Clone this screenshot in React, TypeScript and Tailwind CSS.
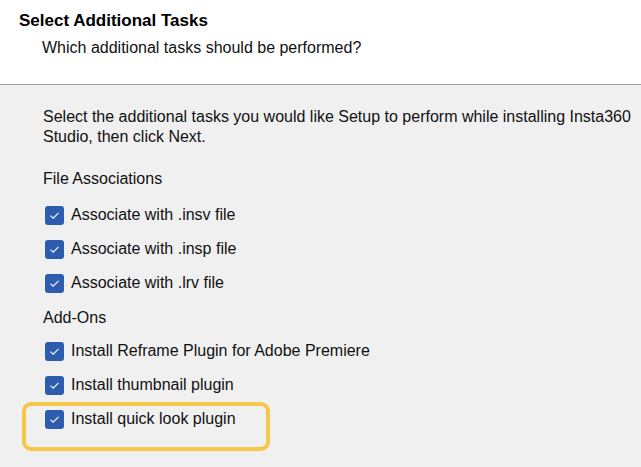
import React from "react";

const Check = () => (
  <span className="flex h-[19px] w-[19px] shrink-0 items-center justify-center rounded-[3px] bg-[#2b5cad]">
    <svg width="11" height="9" viewBox="0 0 11 9" fill="none">
      <path d="M1.5 4.6 L4.2 7.2 L9.5 1.8" stroke="white" strokeWidth="1.1" />
    </svg>
  </span>
);

const Row = ({ label }: { label: string }) => (
  <div className="flex h-[34px] items-center gap-[7px] pl-[45px]">
    <Check />
    <span>{label}</span>
  </div>
);

export default function App() {
  return (
    <div
      className="h-[467px] w-[641px] overflow-hidden bg-[#f0f0f0] text-[16px] text-[#111]"
      style={{ fontFamily: '"Liberation Sans", Arial, sans-serif' }}
    >
      <div className="h-[85px] border-b border-[#a0a0a0] bg-white pl-[19px] pt-[10px]">
        <div className="text-[17px] font-bold leading-[22px] text-black">Select Additional Tasks</div>
        <div className="pl-[23px] pt-[5px] leading-[22px]">Which additional tasks should be performed?</div>
      </div>
      <div className="pt-[22px]">
        <div className="pl-[43px] pr-[10px] leading-[20px]">
          Select the additional tasks you would like Setup to perform while installing Insta360 Studio, then click Next.
        </div>
        <div className="pl-[43px] pt-[21px] leading-[22px]">File Associations</div>
        <div className="pt-[8px]">
          <Row label="Associate with .insv file" />
          <Row label="Associate with .insp file" />
          <Row label="Associate with .lrv file" />
        </div>
        <div className="flex h-[34px] items-center pl-[43px] pt-[2px]">Add-Ons</div>
        <Row label="Install Reframe Plugin for Adobe Premiere" />
        <Row label="Install thumbnail plugin" />
        <div className="ml-[22px] w-[248px] rounded-[9px] border-[4px] border-[#f5c84a] pb-[11px]">
          <div className="-ml-[26px] -mt-[4px]">
            <Row label="Install quick look plugin" />
          </div>
        </div>
      </div>
    </div>
  );
}
